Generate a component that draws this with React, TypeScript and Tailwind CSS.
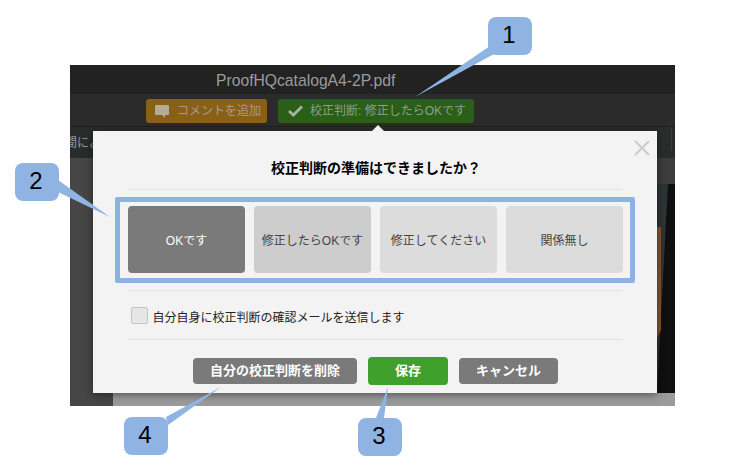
import React from "react";

function Callout({ n, cls }: { n: string; cls: string }) {
  return (
    <div className={`absolute flex h-[38px] w-[44px] items-center justify-center rounded-[8px] bg-[#8fb4e3] pb-[2px] pr-[2px] text-[24px] leading-none text-black ${cls}`}>
      {n}
    </div>
  );
}

export default function App() {
  return (
    <div className="relative h-[472px] w-[746px] overflow-hidden bg-white pl-[70px] pt-[65px] [font-family:'Liberation_Sans','Noto_Sans_CJK_JP',sans-serif]">
      {/* Background application */}
      <div className="flex h-[341px] w-[605px] flex-col bg-[#2a2c2c]">
        <div className="flex h-[29px] items-center bg-[#222222] pl-[146px] pt-[3px] text-[15.7px] text-[#9c9c9c]">
          ProofHQcatalogA4-2P.pdf
        </div>
        <div className="flex h-[33px] gap-[11px] border-b border-[#1d1f1f] bg-[#2b2b2b] pl-[76px] pt-[5px]">
          <div className="flex h-[24px] w-[121px] items-center gap-[8px] rounded-[3px] bg-[#8a5f17] pl-[9px] text-[12px] text-[#a69c8a]">
            <svg width="14" height="13" viewBox="0 0 14 13">
              <path d="M1 0h12a1 1 0 0 1 1 1v8a1 1 0 0 1-1 1h-3v3l-3-3H1a1 1 0 0 1-1-1V1a1 1 0 0 1 1-1z" fill="#b5ab9a" />
            </svg>
            コメントを追加
          </div>
          <div className="flex h-[24px] w-[196px] items-center gap-[7px] rounded-[3px] bg-[#2a5f18] pl-[10px] text-[12px] text-[#909e8a]">
            <svg width="15" height="12" viewBox="0 0 15 12">
              <path d="M1 6l4.300 4L14 1.600" fill="none" stroke="#a6b5a0" strokeWidth="2.800" />
            </svg>
            校正判断: 修正したらOKです
          </div>
        </div>
        <div className="flex h-[31px] items-center overflow-hidden bg-[#2a2c2c]">
          <span className="-ml-[5px] whitespace-nowrap text-[12px] text-[#8d9aa3]">間によ</span>
          <div className="ml-auto mr-[3px] h-[24px] w-px self-start bg-[#3a3c3c]" />
        </div>
        <div className="flex min-h-0 flex-1">
          <div className="w-[43px] bg-[#454645]" />
          <div className="flex flex-1 flex-col">
            <div className="relative flex-1 overflow-hidden bg-[#2e3333]">
              <svg className="absolute inset-0" width="562" height="235" viewBox="0 0 562 235">
                <rect x="0" y="0" width="562" height="26" fill="#3c3c3c" />
                <polygon points="562,26 555,26 544,235 562,235" fill="#0f0f0f" />
                <polygon points="544,69 548,69 548,172 544,180" fill="#80552e" />
              </svg>
            </div>
            <div className="h-[13px] bg-[#9b9b9b]" />
          </div>
        </div>
      </div>

      {/* Modal */}
      <div className="absolute left-[93px] top-[131px] flex h-[262px] w-[564px] flex-col items-center bg-[#f3f3f3] shadow-[0_2px_8px_rgba(0,0,0,0.45)]">
        <div className="absolute -top-[6px] left-[279px] h-0 w-0 border-x-[6px] border-b-[6px] border-x-transparent border-b-[#f3f3f3]" />
        <svg className="absolute right-[7px] top-[9px]" width="16" height="16" viewBox="0 0 16 16">
          <path d="M1 1l14 14M15 1L1 15" stroke="#cccccc" strokeWidth="2" />
        </svg>
        <div className="mt-[28px] pl-[2px] text-[14px] font-bold leading-[18px] text-black">校正判断の準備はできましたか？</div>
        <div className="mt-[12px] h-px w-[495px] bg-[#e3e3e3]" />
        <div className="mt-[7px] flex h-[86px] w-[520px] gap-[9px] rounded-[2px] border-[5px] border-[#8cb3e1] pb-[5px] pl-[8px] pr-[7px] pt-[4px] text-[12px]">
          <div className="flex h-[67px] w-[117px] items-center justify-center rounded-[4px] bg-[#7a7a7a] pt-[2px] text-white">OKです</div>
          <div className="flex h-[67px] w-[117px] items-center justify-center rounded-[4px] bg-[#cdcdcd] pt-[2px] text-[#444444]">修正したらOKです</div>
          <div className="flex h-[67px] w-[117px] items-center justify-center rounded-[4px] bg-[#dcdcdc] pt-[2px] text-[#444444]">修正してください</div>
          <div className="flex h-[67px] w-[117px] items-center justify-center rounded-[4px] bg-[#dcdcdc] pt-[2px] text-[#444444]">関係無し</div>
        </div>
        <div className="mt-[7px] h-px w-[495px] bg-[#e3e3e3]" />
        <div className="mt-[16px] flex h-[17px] w-[495px] items-center gap-[5px] pl-[3px] text-[12px] text-[#222222]">
          <div className="h-[17px] w-[17px] rounded-[2px] border border-[#c4c4c4] bg-[#e6e6e6]" />
          <span className="pt-[5px]">自分自身に校正判断の確認メールを送信します</span>
        </div>
        <div className="mt-[15px] h-px w-[495px] bg-[#e3e3e3]" />
        <div className="mt-[17px] flex items-center pl-[1px] text-[13px] font-bold text-white">
          <div className="flex h-[26px] w-[164px] items-center justify-center rounded-[4px] bg-[#7a7a7a]">自分の校正判断を削除</div>
          <div className="ml-[11px] flex h-[28px] w-[80px] items-center justify-center rounded-[4px] bg-[#3fa02c]">保存</div>
          <div className="ml-[11px] flex h-[26px] w-[99px] items-center justify-center rounded-[4px] bg-[#7a7a7a]">キャンセル</div>
        </div>
      </div>

      {/* Callouts */}
      <svg className="pointer-events-none absolute left-0 top-0" width="746" height="472" viewBox="0 0 746 472">
        <polygon points="490,46 415,97 494,54" fill="#8fb4e3" />
        <polygon points="58,180 110,217 58,192" fill="#8fb4e3" />
        <polygon points="376,418 388,387 384,418" fill="#8fb4e3" />
        <polygon points="166,417 221,387 168,425" fill="#8fb4e3" />
      </svg>
      <Callout n="1" cls="left-[488px] top-[17px]" />
      <Callout n="2" cls="left-[15px] top-[163px]" />
      <Callout n="3" cls="left-[358px] top-[418px]" />
      <Callout n="4" cls="left-[124px] top-[417px]" />
    </div>
  );
}
